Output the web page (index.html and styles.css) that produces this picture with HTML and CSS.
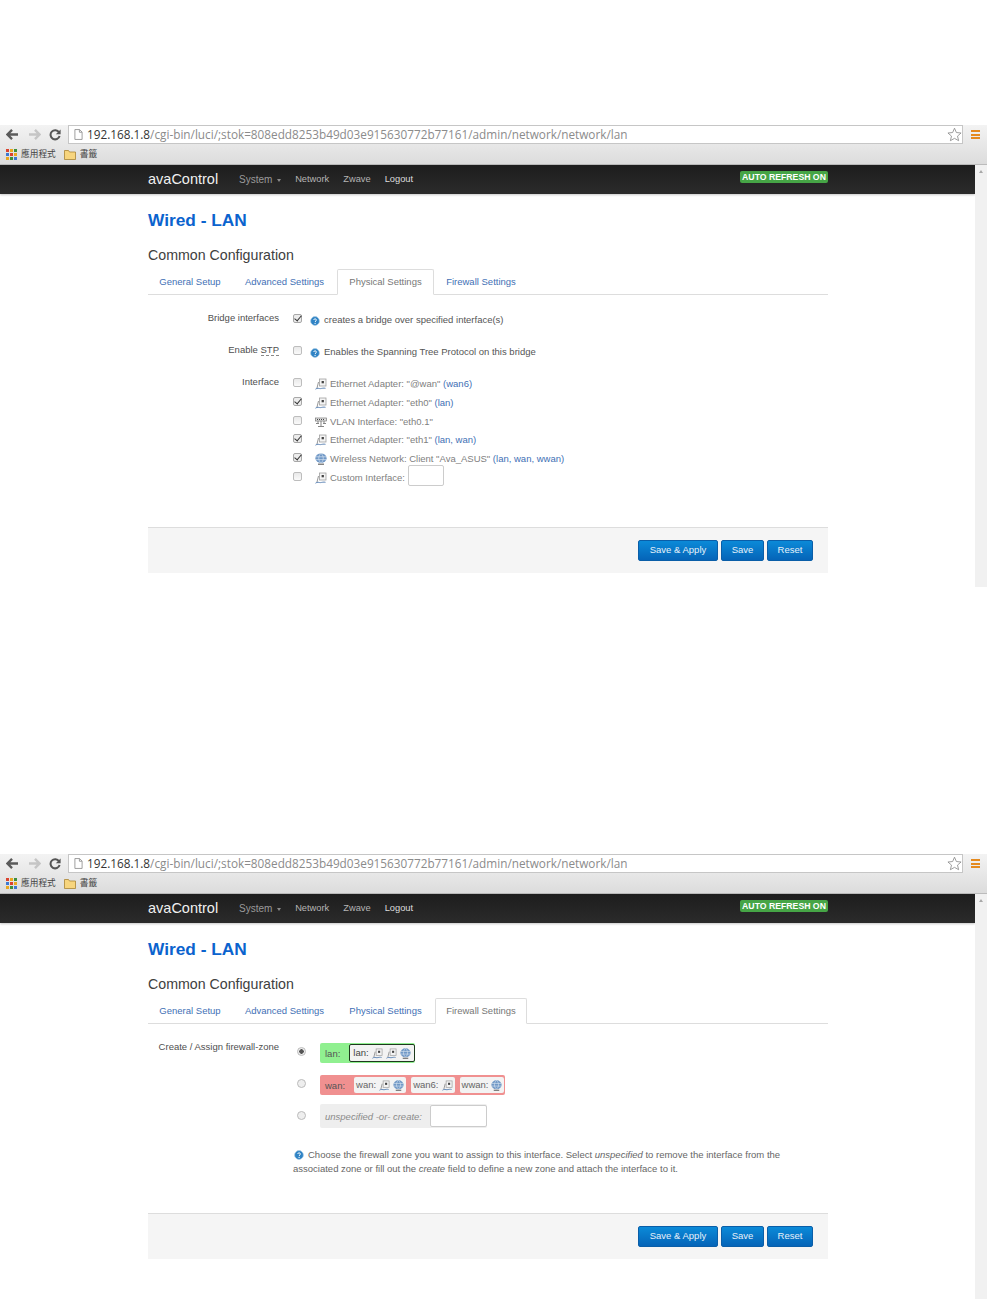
FILE: index.html
```html
<!DOCTYPE html>
<html lang="en">
<head>
<meta charset="utf-8">
<title>avaControl - Wired LAN</title>
<link rel="stylesheet" href="styles.css">
</head>
<body>
<svg class="defs" width="0" height="0" aria-hidden="true">
  <symbol id="i-eth" viewBox="0 0 12 12">
    <rect x="4.500" y="1" width="6.500" height="7" fill="#f4f4f4" stroke="#a0a0a0" stroke-width=".8"/>
    <rect x="6.600" y="3" width="2.300" height="2.300" fill="#444"/>
    <path d="M3.500 4 2 10" stroke="#8a8a8a" stroke-width=".9" fill="none"/>
    <path d="M.5 11.200c2-1.800 3.500-.4 5-.6s3-.8 5-.3" stroke="#5d84b5" stroke-width="1" fill="none"/>
  </symbol>
  <symbol id="i-vlan" viewBox="0 0 12 12">
    <rect x=".5" y="2" width="11" height="3" fill="#e4e4e4" stroke="#777" stroke-width=".7"/>
    <path d="M2 3.500h1M4 3.500h1M6 3.500h1M8 3.500h1" stroke="#333" stroke-width=".9"/>
    <path d="M3 5v2M6 5v5M9 5v2M1 7.500h3M8 7.500h3M3 10.500h6" stroke="#777" stroke-width=".9"/>
  </symbol>
  <symbol id="i-wifi" viewBox="0 0 12 12">
    <ellipse cx="6" cy="5.200" rx="5.600" ry="4.800" fill="#7098c6"/>
    <path d="M1 3.800h10M1 6.600h10M6 .5c-3 2.500-3 7 0 9.400M6 .5c3 2.500 3 7 0 9.400" stroke="#d5e2f0" stroke-width=".7" fill="none"/>
    <path d="M3 11.200h6" stroke="#666" stroke-width="1.200"/>
  </symbol>
  <symbol id="i-help" viewBox="0 0 12 12">
    <circle cx="6" cy="6" r="5.300" fill="#2f83c5" stroke="#a9cbe6" stroke-width=".8"/>
    <path d="M4.400 4.800c.2-1.900 3.300-1.900 3.300 0 0 1.200-1.600 1.200-1.600 2.400" stroke="#fff" stroke-width="1.100" fill="none"/>
    <circle cx="6.100" cy="8.900" r=".7" fill="#fff"/>
  </symbol>
  <symbol id="i-back" viewBox="0 0 14 12">
    <path d="M6.500 1 1.500 6l5 5M2 6h11" fill="none" stroke="currentColor" stroke-width="2.600"/>
  </symbol>
  <symbol id="i-forward" viewBox="0 0 14 12">
    <path d="M7.500 1l5 5-5 5M12 6H1" fill="none" stroke="currentColor" stroke-width="2.600"/>
  </symbol>
  <symbol id="i-reload" viewBox="0 0 12 12">
    <path d="M10 3.200A4.600 4.600 0 1 0 10.600 7" fill="none" stroke="#555" stroke-width="2"/>
    <path d="M11.600 .4v4.800H6.800z" fill="#555"/>
  </symbol>
  <symbol id="i-page" viewBox="0 0 10 12">
    <path d="M1 .5h5.200L9 3.300v8.200H1zM6 .7v2.800h2.800" fill="#fff" stroke="#8a8a8a" stroke-width=".9"/>
  </symbol>
  <symbol id="i-star" viewBox="0 0 16 16">
    <path d="M8 1.300l2 4.600 5 .5-3.800 3.300 1.200 4.900L8 12.100l-4.400 2.500 1.200-4.900L1 6.400l5-.5z" fill="#fff" stroke="#8c8c8c" stroke-width=".9"/>
  </symbol>
  <symbol id="i-apps" viewBox="0 0 11 11">
    <path d="M0 0h3v3H0z" fill="#d9432f"/><path d="M4 0h3v3H4z" fill="#e9a820"/><path d="M8 0h3v3H8z" fill="#3f8f3c"/>
    <path d="M0 4h3v3H0z" fill="#3f78d0"/><path d="M4 4h3v3H4z" fill="#d9432f"/><path d="M8 4h3v3H8z" fill="#e9a820"/>
    <path d="M0 8h3v3H0z" fill="#e9a820"/><path d="M4 8h3v3H4z" fill="#3f8f3c"/><path d="M8 8h3v3H8z" fill="#3f78d0"/>
  </symbol>
  <symbol id="i-folder" viewBox="0 0 12 11">
    <path d="M.5 10.500v-9h4l1 1.500h6v7.500z" fill="#f7d57e" stroke="#a98434" stroke-width=".8"/>
  </symbol>
</svg>

<section class="shot shot-one">
  <header class="chrome">
    <div class="toolbar">
      <svg class="tb-back"><use href="#i-back"/></svg>
      <svg class="tb-forward"><use href="#i-forward"/></svg>
      <svg class="tb-reload"><use href="#i-reload"/></svg>
      <div class="urlbar">
        <svg class="tb-page"><use href="#i-page"/></svg>
        <span class="url"><b>192.168.1.8</b>/cgi-bin/luci/;stok=808edd8253b49d03e915630772b77161/admin/network/network/lan</span>
        <svg class="tb-star"><use href="#i-star"/></svg>
      </div>
      <div class="menu"><i></i><i></i><i></i></div>
    </div>
    <div class="bookmarks">
      <svg class="bm-apps"><use href="#i-apps"/></svg><span class="bm-text">應用程式</span>
      <svg class="bm-folder"><use href="#i-folder"/></svg><span class="bm-text">書籤</span>
    </div>
  </header>
  <div class="viewport">
    <div class="site">
      <nav class="navbar">
        <div class="wrap nav-inner">
          <span class="brand">avaControl</span>
          <span class="nav-item nav-dim">System <i class="caret"></i></span>
          <span class="nav-item">Network</span>
          <span class="nav-item">Zwave</span>
          <span class="nav-item nav-strong">Logout</span>
          <span class="refresh">AUTO REFRESH ON</span>
        </div>
      </nav>
      <main class="wrap">
        <h2 class="title">Wired - LAN</h2>
        <h3 class="section">Common Configuration</h3>
        <ul class="tabs">
          <li class="tab">General Setup</li>
          <li class="tab">Advanced Settings</li>
          <li class="tab tab-active">Physical Settings</li>
          <li class="tab">Firewall Settings</li>
        </ul>
        <div class="form form-physical">
          <div class="row row-single">
            <label class="label">Bridge interfaces</label>
            <input class="check" type="checkbox" checked>
            <span class="hint"><svg class="ico-help"><use href="#i-help"/></svg>creates a bridge over specified interface(s)</span>
          </div>
          <div class="row row-single">
            <label class="label">Enable <span class="abbr">STP</span></label>
            <input class="check" type="checkbox">
            <span class="hint"><svg class="ico-help"><use href="#i-help"/></svg>Enables the Spanning Tree Protocol on this bridge</span>
          </div>
          <div class="row row-list">
            <label class="label">Interface</label>
            <div class="iflist">
              <div class="if"><input class="check" type="checkbox"><svg class="ico"><use href="#i-eth"/></svg><span class="if-text">Ethernet Adapter: "@wan" <span class="nets">(<a>wan6</a>)</span></span></div>
              <div class="if"><input class="check" type="checkbox" checked><svg class="ico"><use href="#i-eth"/></svg><span class="if-text">Ethernet Adapter: "eth0" <span class="nets">(<a>lan</a>)</span></span></div>
              <div class="if"><input class="check" type="checkbox"><svg class="ico"><use href="#i-vlan"/></svg><span class="if-text">VLAN Interface: "eth0.1"</span></div>
              <div class="if"><input class="check" type="checkbox" checked><svg class="ico"><use href="#i-eth"/></svg><span class="if-text">Ethernet Adapter: "eth1" <span class="nets">(<a>lan</a>, <a>wan</a>)</span></span></div>
              <div class="if"><input class="check" type="checkbox" checked><svg class="ico"><use href="#i-wifi"/></svg><span class="if-text">Wireless Network: Client "Ava_ASUS" <span class="nets">(<a>lan</a>, <a>wan</a>, <a>wwan</a>)</span></span></div>
              <div class="if"><input class="check" type="checkbox"><svg class="ico"><use href="#i-eth"/></svg><span class="if-text">Custom Interface:</span><input class="field field-custom" type="text"></div>
            </div>
          </div>
        </div>
        <footer class="actions">
          <button class="btn btn-apply">Save &amp; Apply</button>
          <button class="btn btn-save">Save</button>
          <button class="btn btn-reset">Reset</button>
        </footer>
      </main>
    </div>
    <aside class="scrollbar"><i class="arrow"></i></aside>
  </div>
</section>

<section class="shot shot-two">
  <header class="chrome">
    <div class="toolbar">
      <svg class="tb-back"><use href="#i-back"/></svg>
      <svg class="tb-forward"><use href="#i-forward"/></svg>
      <svg class="tb-reload"><use href="#i-reload"/></svg>
      <div class="urlbar">
        <svg class="tb-page"><use href="#i-page"/></svg>
        <span class="url"><b>192.168.1.8</b>/cgi-bin/luci/;stok=808edd8253b49d03e915630772b77161/admin/network/network/lan</span>
        <svg class="tb-star"><use href="#i-star"/></svg>
      </div>
      <div class="menu"><i></i><i></i><i></i></div>
    </div>
    <div class="bookmarks">
      <svg class="bm-apps"><use href="#i-apps"/></svg><span class="bm-text">應用程式</span>
      <svg class="bm-folder"><use href="#i-folder"/></svg><span class="bm-text">書籤</span>
    </div>
  </header>
  <div class="viewport">
    <div class="site">
      <nav class="navbar">
        <div class="wrap nav-inner">
          <span class="brand">avaControl</span>
          <span class="nav-item nav-dim">System <i class="caret"></i></span>
          <span class="nav-item">Network</span>
          <span class="nav-item">Zwave</span>
          <span class="nav-item nav-strong">Logout</span>
          <span class="refresh">AUTO REFRESH ON</span>
        </div>
      </nav>
      <main class="wrap">
        <h2 class="title">Wired - LAN</h2>
        <h3 class="section">Common Configuration</h3>
        <ul class="tabs">
          <li class="tab">General Setup</li>
          <li class="tab">Advanced Settings</li>
          <li class="tab">Physical Settings</li>
          <li class="tab tab-active">Firewall Settings</li>
        </ul>
        <div class="form form-firewall">
          <div class="fw-row">
            <label class="label">Create / Assign firewall-zone</label>
            <div class="zones">
              <div class="zone-line">
                <input class="radio" type="radio" name="zone" checked>
                <div class="zone zone-lan">
                  <span class="zone-name">lan:</span>
                  <span class="chip chip-current">lan: <svg class="ico-s"><use href="#i-eth"/></svg><svg class="ico-s"><use href="#i-eth"/></svg><svg class="ico-s"><use href="#i-wifi"/></svg></span>
                </div>
              </div>
              <div class="zone-line">
                <input class="radio" type="radio" name="zone">
                <div class="zone zone-wan">
                  <span class="zone-name">wan:</span>
                  <span class="chip">wan: <svg class="ico-s"><use href="#i-eth"/></svg><svg class="ico-s"><use href="#i-wifi"/></svg></span>
                  <span class="chip">wan6: <svg class="ico-s"><use href="#i-eth"/></svg></span>
                  <span class="chip">wwan: <svg class="ico-s"><use href="#i-wifi"/></svg></span>
                </div>
              </div>
              <div class="zone-line">
                <input class="radio" type="radio" name="zone">
                <div class="zone zone-new">
                  <em>unspecified -or- create:</em>
                  <input class="field field-zone" type="text">
                </div>
              </div>
            </div>
          </div>
          <p class="desc"><svg class="ico-help"><use href="#i-help"/></svg>Choose the firewall zone you want to assign to this interface. Select <em>unspecified</em> to remove the interface from the associated zone or fill out the <em>create</em> field to define a new zone and attach the interface to it.</p>
        </div>
        <footer class="actions">
          <button class="btn btn-apply">Save &amp; Apply</button>
          <button class="btn btn-save">Save</button>
          <button class="btn btn-reset">Reset</button>
        </footer>
      </main>
    </div>
    <aside class="scrollbar"><i class="arrow"></i></aside>
  </div>
</section>
</body>
</html>
```
FILE: styles.css
```css
* { box-sizing: border-box; }
html, body { margin: 0; padding: 0; }
body {
  width: 987px;
  height: 1299px;
  overflow: hidden;
  background: #fff;
  color: #555;
  font-family: "Liberation Sans", Arial, sans-serif;
  font-size: 9.500px;
  padding-top: 125px;
}
.defs { display: block; height: 0; }
.shot { display: flex; flex-direction: column; }
.shot-one { height: 462px; margin-bottom: 267px; }
.shot-two { height: 445px; }

/* browser chrome */
.chrome { height: 40px; background: linear-gradient(#f3f3f3, #dcdcdc); border-bottom: 1px solid #bbb; }
.toolbar { height: 19px; display: flex; align-items: center; }
.toolbar svg { flex: none; }
.tb-back { width: 13px; height: 11px; margin-left: 6px; color: #5a5a5a; }
.tb-forward { width: 13px; height: 11px; margin-left: 9px; color: #c5c5c5; }
.tb-reload { width: 12px; height: 12px; margin-left: 8px; }
.urlbar {
  width: 895px; height: 19px; margin-left: 7px;
  display: flex; align-items: center;
  background: #fff; border: 1px solid #c6c6c6;
  padding-left: 5px;
}
.tb-page { width: 9px; height: 11px; }
.url { margin-left: 4px; margin-top: -2px; font: 11.780px/16px "Open Sans", sans-serif; color: #8b8b8b; white-space: nowrap; flex: 1; }
.url b { font-weight: 400; color: #333; }
.tb-star { width: 15px; height: 15px; margin-right: 0; }
.menu { width: 9px; margin-left: 8px; display: flex; flex-direction: column; gap: 1.500px; }
.menu i { display: block; height: 2px; background: #e58a1e; }
.bookmarks { height: 20px; display: flex; align-items: center; padding-left: 6px; }
.bm-apps { width: 11px; height: 11px; }
.bm-text { font: 8.700px/12px "Noto Sans CJK TC", sans-serif; color: #444; margin-left: 4px; }
.bm-folder { width: 12px; height: 11px; margin-left: 8px; }

/* page */
.viewport { flex: 1; display: flex; min-height: 0; }
.site { flex: 1; min-width: 0; }
.scrollbar { width: 12px; background: #f1f1f1; display: flex; justify-content: center; padding-top: 5px; }
.arrow { width: 0; height: 0; border: 2.500px solid transparent; border-top: 0; border-bottom: 3px solid #a8a8a8; }
.wrap { width: 680px; margin-left: 148px; }

.navbar { height: 29px; background: linear-gradient(#1d1d1d, #2b2b2b); box-shadow: 0 1px 2px rgba(0,0,0,.22); }
.nav-inner { height: 29px; display: flex; align-items: center; }
.brand { font-size: 14.500px; color: #f0f0f0; width: 91px; position: relative; top: -1px; }
.nav-item { color: #b5b5b5; font-size: 9.300px; margin-right: 14px; white-space: nowrap; position: relative; top: -.5px; }
.nav-dim { color: #9a9a9a; font-size: 10px; }
.nav-strong { color: #ddd; }
.caret { display: inline-block; width: 0; height: 0; margin: 0 0 1px 2px; border: 2.500px solid transparent; border-bottom: 0; border-top: 3px solid #8a8a8a; }
.refresh {
  margin-left: auto; height: 12px; width: 88px; margin-top: -5px;
  background: #46a546; border-radius: 2px;
  color: #fff; font-weight: 700; font-size: 8.700px; line-height: 12px; text-align: center; white-space: nowrap;
}

.title { margin: 0; padding-top: 15px; height: 42px; font-size: 17.300px; line-height: 22px; font-weight: 700; color: #0b63ce; }
.section { margin: 0; height: 33px; padding-top: 9px; font-size: 14.200px; line-height: 20px; font-weight: 400; color: #404040; }
.tabs { list-style: none; margin: 0; padding: 0; height: 26px; display: flex; border-bottom: 1px solid #ddd; }
.tab { height: 26px; line-height: 25px; text-align: center; color: #3f70b5; font-size: 9.500px; white-space: nowrap; flex: none; }
.tab:nth-child(1) { width: 84px; }
.tab:nth-child(2) { width: 105px; }
.tab:nth-child(3) { width: 97px; }
.tab:nth-child(4) { width: 92px; margin-left: 1px; }
.tab-active { line-height: 24px; color: #777; background: #fff; border: 1px solid #ddd; border-bottom-color: #fff; border-radius: 2px 2px 0 0; }

/* physical settings */
.form-physical { height: 232px; padding-top: 14px; }
.form-firewall { height: 189px; padding-top: 15px; }
.label { width: 131px; flex: none; text-align: right; color: #4f4f4f; font-size: 9.500px; line-height: 18px; white-space: nowrap; }
.abbr { border-bottom: 1px dashed #888; }
.row { display: flex; }
.row-single { height: 32px; }
.check {
  appearance: none; -webkit-appearance: none; flex: none;
  width: 9px; height: 9px; margin: 5px 0 0 14px;
  background: linear-gradient(#e9e9e9, #fafafa); border: 1px solid #bdbdbd; border-radius: 2px;
  position: relative;
}
.check:checked { background: #ececec; border-color: #a8a8a8; }
.check:checked::after {
  content: ""; position: absolute; left: 2px; top: -1px; width: 3px; height: 6px;
  border: solid #333; border-width: 0 1.500px 1.500px 0; transform: rotate(40deg);
}
.hint { display: flex; align-items: center; height: 14px; margin: 4px 0 0 8px; color: #555; line-height: 14px; white-space: nowrap; }
.ico-help { width: 10px; height: 10px; margin: 2px 4px 0 0; flex: none; }
.iflist { display: flex; flex-direction: column; }
.if { height: 18.800px; display: flex; white-space: nowrap; }
.if .ico { width: 12px; height: 12px; margin: 5px 3px 0 13px; flex: none; }
.if-text { color: #808080; line-height: 14px; margin-top: 4px; }
.nets { color: #3f70b5; }
.field { background: #fff; border: 1px solid #ccc; border-radius: 2px; padding: 0; }
.field-custom { width: 36px; height: 21px; margin: -2px 0 0 3px; }

.actions { height: 46px; display: flex; justify-content: flex-end; align-items: center; gap: 3px; padding-right: 15px; background: #f5f5f5; border-top: 1px solid #ddd; }
.btn {
  height: 21px; padding: 0 0 2px; border: 1px solid #0a5ea8; border-radius: 2px;
  background: linear-gradient(#0b8ad8, #0564b8);
  color: #e6f1fa; font: 9.500px/17px "Liberation Sans", Arial, sans-serif;
}
.btn-apply { width: 80px; }
.btn-save { width: 43px; }
.btn-reset { width: 46px; }

/* firewall */
.fw-row { display: flex; }
.fw-row .label { line-height: 16px; }
.zones { margin-left: 18px; padding-top: 4px; display: flex; flex-direction: column; }
.zone-line { height: 32px; display: flex; }
.radio {
  appearance: none; -webkit-appearance: none; flex: none;
  width: 9px; height: 9px; margin: 4px 14px 0 0;
  background: #eee; border: 1px solid #bbb; border-radius: 50%;
}
.radio:checked { background: radial-gradient(#555 0 2px, #eee 2.500px); }
.zone { height: 20px; display: flex; align-items: center; gap: 4px; padding: 0 2px 0 5px; border-radius: 2px; white-space: nowrap; }
.zone-name { color: #555; margin-right: 5px; }
.zone-lan { width: 95px; background: #90f090; padding-right: 0; }
.zone-wan { width: 185px; background: #f09090; gap: 5px; }
.zone-wan .zone-name { margin-right: 4px; }
.zone-new { width: 167px; height: 24px; margin-top: -3px; background: #eee; color: #8a8a8a; }
.zone-new .field-zone { width: 57px; height: 22px; margin-left: 4px; }
.chip { height: 16px; padding: 0 2px; background: #f3f3f3; border-radius: 2px; color: #666; line-height: 16px; display: inline-flex; align-items: center; gap: 3px; }
.chip-current { border: 1px solid #1d3a1d; color: #444; height: 18px; padding: 0 3px; flex: 1; }
.ico-s { width: 11px; height: 11px; }
.desc { margin: 9px 0 0 145px; width: 500px; color: #666; line-height: 14px; }
.desc .ico-help { vertical-align: -2px; margin: 0 4px 0 1px; }
```
